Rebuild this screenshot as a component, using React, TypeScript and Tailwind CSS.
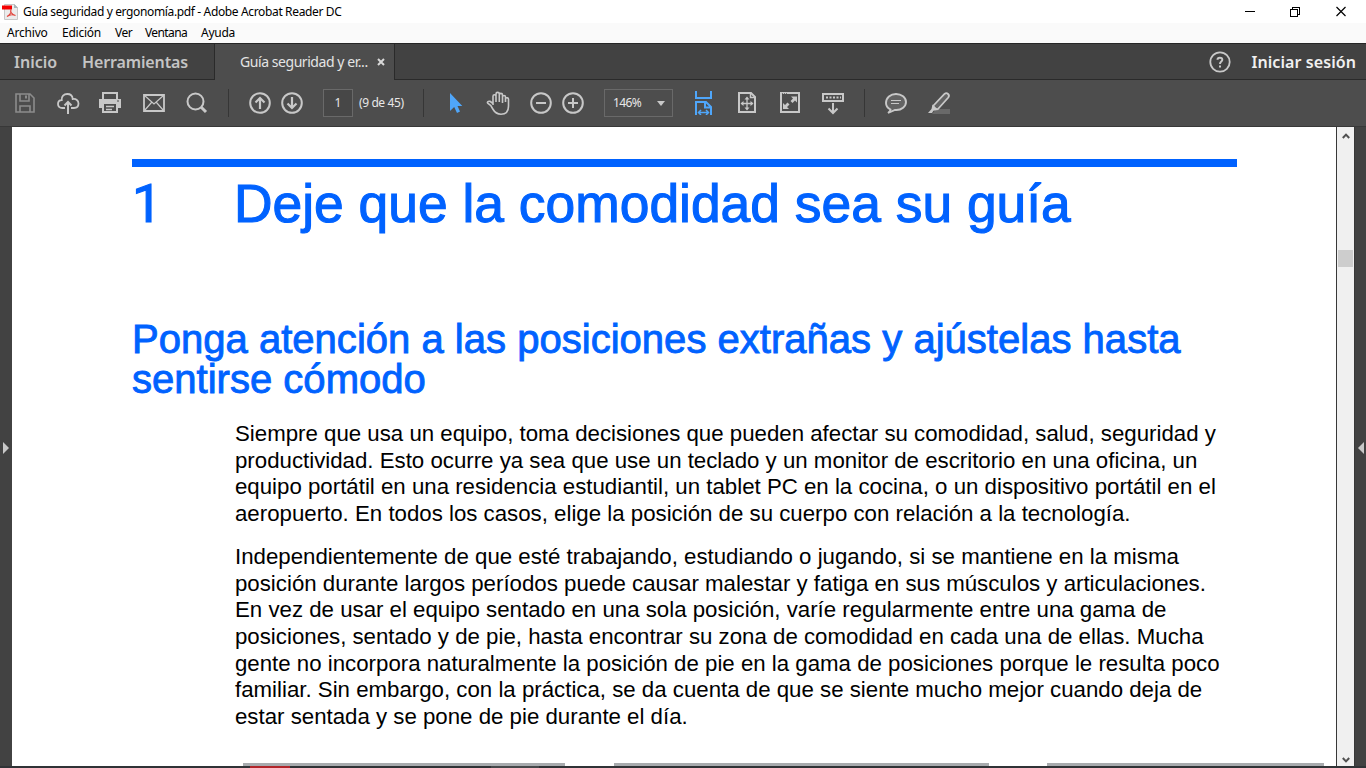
import type { ReactNode } from "react";

const ui = "font-['Noto_Sans','Open_Sans',sans-serif]";

function Icon({ children, className }: { children: ReactNode; className: string }) {
  return (
    <svg
      viewBox="0 0 24 24"
      fill="none"
      stroke="currentColor"
      strokeWidth="2"
      className={`size-6 shrink-0 ${className}`}
    >
      {children}
    </svg>
  );
}

function Divider({ className }: { className: string }) {
  return <div className={`h-7 w-px shrink-0 bg-[#363636] ${className}`} />;
}

function TitleBar() {
  return (
    <header className="flex h-[23px] shrink-0 items-center bg-white text-black">
      <svg viewBox="0 0 17 18" className="ml-[2px] h-[18px] w-[17px] shrink-0">
        <path d="M2.500 1.500H12.500L15.500 4.500V16.500H2.500Z" fill="#ececec" stroke="#c8c8c8" />
        <path d="M12 1V5H16Z" fill="#a9b4b8" />
        <path d="M0 2.500H10V6.500H0Z" fill="#f40000" />
        <path d="M5 13.500C8 12 9.500 9 8.800 7C8 8.500 9.500 11.500 13.500 12.500C10 11 7 12 5 13.500Z" fill="none" stroke="#e2453c" strokeWidth="1.1" />
      </svg>
      <span className="ml-[4px] whitespace-nowrap text-[12px] leading-[22px] tracking-[-0.36px]">
        Guía seguridad y ergonomía.pdf - Adobe Acrobat Reader DC
      </span>
      <svg viewBox="0 0 110 20" className="ml-auto mr-[16px] h-5 w-[110px] shrink-0" fill="none" stroke="#000" shapeRendering="crispEdges">
        <path d="M5 9.500H15" />
        <path d="M50.500 7.500H57.500V14.500H50.500ZM52.500 7V5.500H59.500V12.500H58" />
        <path d="M96.500 5L105.500 14M105.500 5L96.500 14" shapeRendering="auto" strokeWidth="1.2" />
      </svg>
    </header>
  );
}

function MenuBar() {
  return (
    <nav className="flex h-5 shrink-0 items-center bg-[#fafafa] pl-[7px] text-[12px] leading-5 text-black">
      <span className="w-[55px] tracking-[-0.2px]">Archivo</span>
      <span className="w-[53px] tracking-[-0.25px]">Edición</span>
      <span className="w-[30px] tracking-[-0.45px]">Ver</span>
      <span className="w-[56px] tracking-[-0.6px]">Ventana</span>
      <span className="tracking-[-0.25px]">Ayuda</span>
    </nav>
  );
}

function TabBar() {
  return (
    <div className="flex h-[37px] shrink-0 border-t border-[#262626] bg-[#424242]">
      <div className="flex w-[215px] items-center border-b border-r border-[#2a2a2a] pl-[14px] text-[16px] font-semibold text-[#c4c4c4]">
        <span className="w-[68px]">Inicio</span>
        <span className="tracking-[-0.13px]">Herramientas</span>
      </div>
      <div className="flex w-[179px] items-center bg-[#4d4d4d] pl-[25px] text-[#e4e4e4]">
        <span className="w-[137px] whitespace-nowrap text-[14px] leading-[34px] tracking-[-0.44px]">Guía seguridad y er...</span>
        <svg viewBox="0 0 8 8" className="size-2 shrink-0" stroke="#d8d8d8" strokeWidth="2">
          <path d="M1 1L7 7M7 1L1 7" />
        </svg>
      </div>
      <div className="flex flex-1 items-center justify-end border-b border-l border-[#2a2a2a] pr-[10px]">
        <svg viewBox="0 0 24 24" className="size-6 text-[#c8c8c8]" fill="none" stroke="currentColor" strokeWidth="1.8">
          <circle cx="12" cy="12" r="9.700" />
          <path d="M9.500 9.700C9.500 7 14.300 6.900 14.300 9.700C14.300 11.600 12 11.300 12 14" strokeWidth="2" />
          <path d="M12 15.500V17.500" strokeWidth="2" />
        </svg>
        <span className="ml-[19px] whitespace-nowrap text-[16px] font-semibold tracking-[0.08px] text-[#f0f0f0]">Iniciar sesión</span>
      </div>
    </div>
  );
}

function Toolbar() {
  return (
    <div className="flex h-[47px] shrink-0 items-center border-b border-[#383838] bg-[#4d4d4d] text-[#c8c8c8]">
      <Icon className="ml-[13px] text-[#8c8c8c]">
        <path d="M3 3H17L21 7V21H3ZM7 3V10H16V3M7 21V15H17V21" strokeWidth="1.6" />
        <path d="M13 4.500V7.500" strokeWidth="2" />
      </Icon>
      <Icon className="ml-[19px]">
        <path d="M9 17H6.300C3.500 17 2 15.300 2 13C2 10.700 3.500 9.300 5.700 9.200C5.200 5.500 8 3 11.200 3C14.300 3 16.500 5 16.700 8C20 7.500 22.500 9.500 22.500 12.500C22.500 15 20.800 17 18 17H15" strokeWidth="1.8" />
        <path d="M12 23V11M8.500 14.500L12 11L15.500 14.500" />
      </Icon>
      <Icon className="ml-[18px]">
        <path d="M5 8V2H19V8" />
        <path d="M1 8H23V17H19V13H5V17H1Z" fill="currentColor" stroke="none" />
        <path d="M5 13V21H19V13" />
        <path d="M8 15.500H16M8 18.500H14" strokeWidth="1.4" />
        <path d="M19 10H21" stroke="#4d4d4d" strokeWidth="1" />
      </Icon>
      <Icon className="ml-[20px]">
        <path d="M2 4H22V20H2Z" strokeWidth="1.8" />
        <path d="M2.500 4.500L12 13L21.500 4.500M2.500 19.500L9.500 11.500M21.500 19.500L14.500 11.500" strokeWidth="1.2" />
      </Icon>
      <Icon className="ml-[19px]">
        <circle cx="10.500" cy="10.500" r="8" />
        <path d="M16 16L21 21" strokeWidth="3" />
      </Icon>
      <Divider className="ml-[19px]" />
      <Icon className="ml-[19px]">
        <circle cx="12" cy="12" r="9.800" />
        <path d="M12 18V7.500M7.500 11.500L12 7L16.500 11.500" strokeWidth="2.200" />
      </Icon>
      <Icon className="ml-[8px]">
        <circle cx="12" cy="12" r="9.800" />
        <path d="M12 6V16.500M7.500 12.500L12 17L16.500 12.500" strokeWidth="2.200" />
      </Icon>
      <div className="ml-[19px] flex h-7 w-[30px] shrink-0 items-center justify-center border border-[#696969] bg-[#474747] text-[12px] text-[#e8e8e8]">1</div>
      <span className="ml-[6px] w-[47px] shrink-0 whitespace-nowrap text-[12px] tracking-[-0.4px] text-[#e8e8e8]">(9 de 45)</span>
      <Divider className="ml-[17px]" />
      <Icon className="ml-[20px] text-[#4fa6fa]">
        <path d="M6 2V20L10.200 16L13 22L16 20.500L13.500 15H18.300Z" fill="currentColor" stroke="none" />
      </Icon>
      <Icon className="ml-[18px]">
        <path d="M7 14V5.200C7 3.200 10 3.200 10 5.200V11M10 5V3C10 .8 13.300 .8 13.300 3V11M13.300 4C13.300 1.800 16.500 1.800 16.500 4V12M16.500 6C16.500 4 19.500 4 19.500 6V11M19.500 7.500C20.500 6.200 22.700 6.800 22.500 8.500V15C22.500 20.500 19.500 23.200 15 23.200C10.500 23.200 8.500 21 6.800 18L4.800 14.500L2 12.500C.7 11.200 2 9.800 4 10.300L7 12.500" strokeWidth="1.600" />
      </Icon>
      <Icon className="ml-[19px]">
        <circle cx="12" cy="12" r="9.800" />
        <path d="M7 12H17" />
      </Icon>
      <Icon className="ml-[8px]">
        <circle cx="12" cy="12" r="9.800" />
        <path d="M7 12H17M12 7V17" />
      </Icon>
      <div className="ml-[19px] flex h-7 w-[69px] shrink-0 items-center justify-between border border-[#696969] pl-[8px] pr-[7px] text-[12px] text-[#e8e8e8]">
        <span className="tracking-[-0.6px]">146%</span>
        <svg viewBox="0 0 8 5" className="h-[5px] w-2" fill="#c8c8c8"><path d="M0 0H8L4 5Z" /></svg>
      </div>
      <Icon className="ml-[18px] text-[#4fa6fa]">
        <path d="M5 0V7H20V0M5 24V11H15L20 16V24M14 11V16.500H20" strokeWidth="2" />
        <path d="M8 21.500H17M10 19L7.500 21.500L10 24M15 19L17.500 21.500L15 24" strokeWidth="1.500" />
      </Icon>
      <Icon className="ml-[20px]">
        <path d="M4 2H16L20 6V21H4Z" />
        <path d="M15.500 2V6.500H20" strokeWidth="1.500" />
        <path d="M12 7V18M6.500 12.500H17.500" strokeWidth="1.300" />
        <path d="M12 5.500L14.500 8.500H9.500ZM12 19.500L14.500 16.500H9.500ZM5.500 12.500L8.500 10V15ZM18.500 12.500L15.500 10V15Z" fill="currentColor" stroke="none" />
      </Icon>
      <Icon className="ml-[19px]">
        <path d="M3 2H21V21H3Z" />
        <path d="M4 2.500H10" stroke="#737373" strokeWidth="1" strokeDasharray="1 1" />
        <path d="M13 5.500H19V11.500L17 9.500L14.500 12L12.500 10L15 7.500ZM5 12L7 14L9.500 11.500L11.500 13.500L9 16L11 18H5Z" fill="currentColor" stroke="none" />
      </Icon>
      <Icon className="ml-[19px]">
        <path d="M2 3H22V10H2Z" />
        <path d="M5 6.500H20" strokeDasharray="2 1.500" />
        <path d="M12 12V22M7.500 17.500L12 22L16.500 17.500" />
      </Icon>
      <Divider className="ml-[19px]" />
      <Icon className="ml-[19px]">
        <path d="M6.500 18.500C3.500 17 2 14.500 2 12C2 6.500 6.500 3 12 3C17.500 3 22 6.500 22 11C22 15.500 17.500 19 12.500 19H11L4 22C5.500 21 6.500 20 6.500 18.500Z" strokeWidth="1.900" fill="#636363" />
        <path d="M7 9.500H17M7 12.500H15" strokeWidth="1.200" />
      </Icon>
      <Icon className="ml-[19px]">
        <path d="M9 18H23V23H5Z" fill="#696969" stroke="none" />
        <path d="M6.500 14.500L17.500 3C20 .8 23.200 4 21.300 6.500L11 18L6.500 18.500Z" strokeWidth="1.800" fill="#636363" />
        <path d="M5.500 13.500L11.500 19L6.500 19.500L5 22H1L4.500 18Z" fill="currentColor" stroke="none" />
      </Icon>
    </div>
  );
}

function Scrollbar() {
  return (
    <div className="flex w-[19px] shrink-0 flex-col items-center justify-between border-x border-[#383838] bg-[#f0f0f0]">
      <div className="flex w-full flex-col items-center">
        <svg viewBox="0 0 8 6" className="mt-[6px] h-[6px] w-2" fill="none" stroke="#505050" strokeWidth="2">
          <path d="M.8 5L4 1.600L7.200 5" />
        </svg>
        <div className="mt-[111px] h-[17px] w-[15px] bg-[#cdcdcd]" />
      </div>
      <svg viewBox="0 0 8 6" className="mb-[3px] h-[6px] w-2" fill="none" stroke="#505050" strokeWidth="2">
        <path d="M.8 1L4 4.400L7.200 1" />
      </svg>
    </div>
  );
}

const first = [
  "Siempre que usa un equipo, toma decisiones que pueden afectar su comodidad, salud, seguridad y",
  "productividad. Esto ocurre ya sea que use un teclado y un monitor de escritorio en una oficina, un",
  "equipo portátil en una residencia estudiantil, un tablet PC en la cocina, o un dispositivo portátil en el",
  "aeropuerto. En todos los casos, elige la posición de su cuerpo con relación a la tecnología.",
];
const second = [
  "Independientemente de que esté trabajando, estudiando o jugando, si se mantiene en la misma",
  "posición durante largos períodos puede causar malestar y fatiga en sus músculos y articulaciones.",
  "En vez de usar el equipo sentado en una sola posición, varíe regularmente entre una gama de",
  "posiciones, sentado y de pie, hasta encontrar su zona de comodidad en cada una de ellas. Mucha",
  "gente no incorpora naturalmente la posición de pie en la gama de posiciones porque le resulta poco",
  "familiar. Sin embargo, con la práctica, se da cuenta de que se siente mucho mejor cuando deja de",
  "estar sentada y se pone de pie durante el día.",
];

function Paragraph({ lines, className }: { lines: string[]; className: string }) {
  return (
    <p className={`ml-[103px] text-[22.26px] leading-[26.7px] text-black ${className}`}>
      {lines.map((line) => (
        <span key={line} className="block whitespace-nowrap">{line}</span>
      ))}
    </p>
  );
}

function Page() {
  return (
    <main className="flex min-w-0 flex-1 flex-col overflow-hidden bg-white font-['Liberation_Sans',Arial,sans-serif]">
      <div className="ml-[120px] mt-[32px] w-[1105px] shrink-0">
        <div className="h-2 bg-[#0062ff]" />
        <h1 className="mt-[7px] flex h-[60px] items-baseline whitespace-nowrap text-[53.38px] leading-[60px] text-[#0062ff] [-webkit-text-stroke:1.1px_#0062ff]">
          <span className="w-[102px] font-['Roboto','Liberation_Sans',sans-serif]">1</span>
          <span>Deje que la comodidad sea su guía</span>
        </h1>
        <h2 className="mt-[85px] whitespace-nowrap text-[40.05px] leading-[40px] text-[#0062ff] [-webkit-text-stroke:0.9px_#0062ff]">
          <span className="block">Ponga atención a las posiciones extrañas y ajústelas hasta</span>
          <span className="block">sentirse cómodo</span>
        </h2>
        <Paragraph lines={first} className="mt-[22px]" />
        <Paragraph lines={second} className="mt-[16px]" />
      </div>
      <div className="mt-auto flex h-[3px] shrink-0">
        <div className="ml-[231px] w-[322px] bg-[#a8abae]" />
        <div className="ml-[49px] w-[375px] bg-[#a8abae]" />
        <div className="ml-[58px] w-[277px] bg-[#a8abae]" />
      </div>
    </main>
  );
}

export default function App() {
  return (
    <div className={`flex h-[768px] w-[1366px] flex-col overflow-hidden bg-[#424242] ${ui}`}>
      <TitleBar />
      <MenuBar />
      <TabBar />
      <Toolbar />
      <div className="flex min-h-0 flex-1">
        <aside className="flex w-3 shrink-0 items-center">
          <svg viewBox="0 0 6 12" className="ml-[3px] mt-[2px] h-3 w-[6px]" fill="#c8c8c8"><path d="M0 0L6 6L0 12Z" /></svg>
        </aside>
        <Page />
        <Scrollbar />
        <aside className="flex w-[11px] shrink-0 items-center justify-end">
          <svg viewBox="0 0 6 12" className="mr-[2px] mt-[2px] h-3 w-[6px]" fill="#c8c8c8"><path d="M6 0L0 6L6 12Z" /></svg>
        </aside>
      </div>
      <footer className="flex h-[2px] shrink-0 bg-[#303336]">
        <div className="ml-[250px] w-10 bg-[#b1252a]" />
        <div className="ml-[201px] w-12 bg-[#46484a]" />
      </footer>
    </div>
  );
}
